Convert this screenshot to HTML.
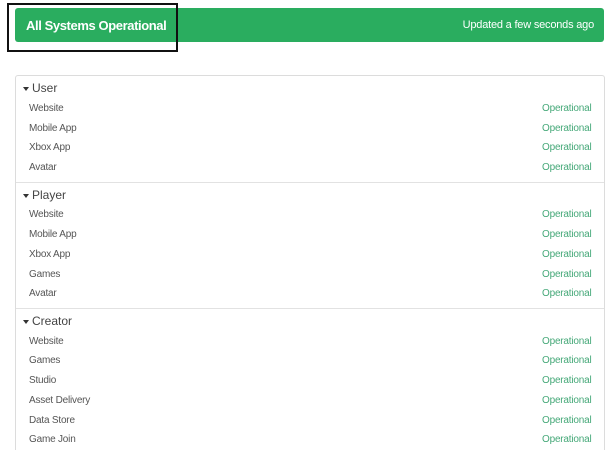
<!DOCTYPE html><html><head><style>
html,body{margin:0;width:612px;height:450px;overflow:hidden}
body{background:#fff;font-family:"Liberation Sans",sans-serif;position:relative}
.bar{position:absolute;left:15px;top:8px;width:589px;height:34px;background:#2aad5f;border-radius:3px;color:#fff}
.bar .t{position:absolute;left:11px;top:10px;font-size:13px;font-weight:bold;letter-spacing:-0.4px}
.bar .u{position:absolute;right:10px;top:11px;font-size:11px;letter-spacing:-0.2px}
.box{position:absolute;left:7px;top:3px;width:167px;height:45px;border:2px solid #111}
.panel{position:absolute;left:15px;top:75px;width:588px;height:380px;border:1px solid #dcdcdc;border-bottom:none;border-radius:3px 3px 0 0}
.h{position:absolute;left:23px;font-size:12px;color:#444}
.h:before{content:"";display:inline-block;border-left:3.5px solid transparent;border-right:3.5px solid transparent;border-top:4px solid #333;margin-right:3px;vertical-align:middle}
.r{position:absolute;left:29px;font-size:10px;color:#555;letter-spacing:-0.2px}
.s{position:absolute;left:542px;font-size:10px;color:#45a878;letter-spacing:-0.2px}
.d{position:absolute;left:16px;width:588px;height:1px;background:#e2e2e2}
</style></head><body>
<div class="bar"><span class="t">All Systems Operational</span><span class="u">Updated a few seconds ago</span></div>
<div class="box"></div>
<div class="panel"></div>
<div class="h" style="top:81px">User</div>
<div class="r" style="top:103px">Website</div><div class="s" style="top:103px">Operational</div>
<div class="r" style="top:123px">Mobile App</div><div class="s" style="top:123px">Operational</div>
<div class="r" style="top:142px">Xbox App</div><div class="s" style="top:142px">Operational</div>
<div class="r" style="top:162px">Avatar</div><div class="s" style="top:162px">Operational</div>
<div class="d" style="top:182px"></div>
<div class="h" style="top:188px">Player</div>
<div class="r" style="top:209px">Website</div><div class="s" style="top:209px">Operational</div>
<div class="r" style="top:229px">Mobile App</div><div class="s" style="top:229px">Operational</div>
<div class="r" style="top:249px">Xbox App</div><div class="s" style="top:249px">Operational</div>
<div class="r" style="top:269px">Games</div><div class="s" style="top:269px">Operational</div>
<div class="r" style="top:288px">Avatar</div><div class="s" style="top:288px">Operational</div>
<div class="d" style="top:308px"></div>
<div class="h" style="top:314px">Creator</div>
<div class="r" style="top:336px">Website</div><div class="s" style="top:336px">Operational</div>
<div class="r" style="top:355px">Games</div><div class="s" style="top:355px">Operational</div>
<div class="r" style="top:375px">Studio</div><div class="s" style="top:375px">Operational</div>
<div class="r" style="top:395px">Asset Delivery</div><div class="s" style="top:395px">Operational</div>
<div class="r" style="top:415px">Data Store</div><div class="s" style="top:415px">Operational</div>
<div class="r" style="top:434px">Game Join</div><div class="s" style="top:434px">Operational</div>
</body></html>
